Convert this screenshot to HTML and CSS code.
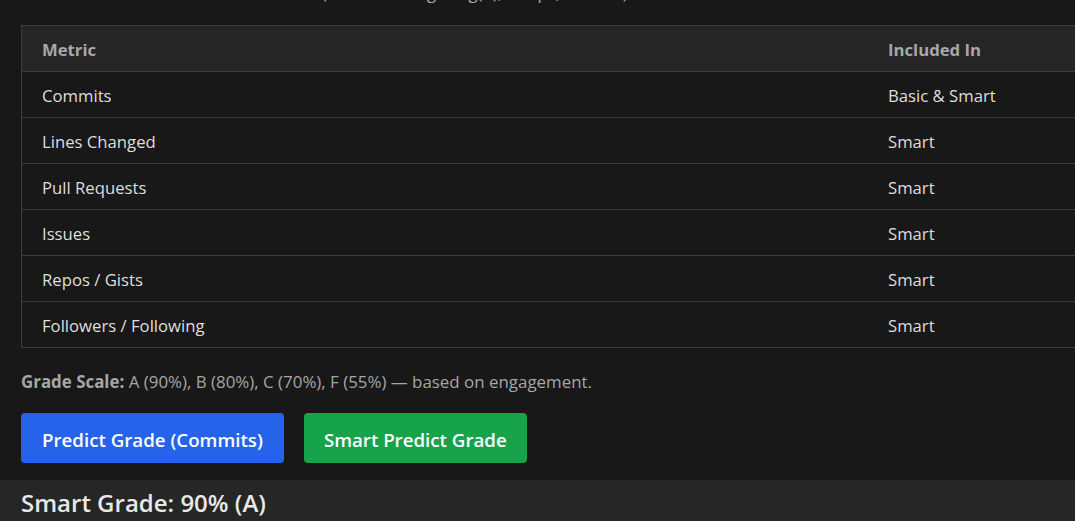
FILE: index.html
```html
<!DOCTYPE html>
<html>
<head>
<meta charset="utf-8">
<link rel="stylesheet" href="styles.css">
</head>
<body>
<div class="page">
  <p class="intro">(scaled using log(n), caps, ratios)</p>
  <table class="metrics">
    <thead>
      <tr><th class="c1">Metric</th><th class="c2">Included In</th></tr>
    </thead>
    <tbody>
      <tr><td>Commits</td><td>Basic &amp; Smart</td></tr>
      <tr><td>Lines Changed</td><td>Smart</td></tr>
      <tr><td>Pull Requests</td><td>Smart</td></tr>
      <tr><td>Issues</td><td>Smart</td></tr>
      <tr><td>Repos / Gists</td><td>Smart</td></tr>
      <tr><td>Followers / Following</td><td>Smart</td></tr>
    </tbody>
  </table>
  <p class="scale"><strong>Grade Scale:</strong> A (90%), B (80%), C (70%), F (55%) — based on engagement.</p>
  <div class="actions">
    <button class="btn btn-blue">Predict Grade (Commits)</button>
    <button class="btn btn-green">Smart Predict Grade</button>
  </div>
</div>
<div class="result">
  <h2 class="result-title">Smart Grade: 90% (A)</h2>
</div>
</body>
</html>
```

FILE: styles.css
```css
html, body {
  margin: 0;
  padding: 0;
  background: #181818;
  overflow: hidden;
}
body {
  font-family: "Open Sans", "Noto Sans", sans-serif;
  color: #dddddd;
  font-size: 16.7px;
}
.page {
  padding-left: 21px;
}
.intro {
  margin: -18px 0 0 0;
  height: 21px;
  line-height: 21px;
  color: #aaaaaa;
  font-size: 16.7px;
  padding-left: 301px;
  word-spacing: 14px;
}
.metrics {
  margin-top: 22px;
  border-collapse: collapse;
  width: 1120px;
  table-layout: fixed;
  border-left: 1px solid #3b3b3b;
}
.metrics th, .metrics td {
  border-top: 1px solid #3b3b3b;
  border-bottom: 1px solid #3b3b3b;
  padding: 13px 20px 11px;
  line-height: 21px;
  text-align: left;
  font-size: 16.7px;
}
.metrics th {
  background: #262626;
  color: #a8a8a8;
  font-weight: 700;
}
.metrics td {
  color: #dedede;
}
.c1 { width: 806px; }
.scale {
  margin: 23px 0 0 0;
  color: #a6a6a6;
  font-size: 16.9px;
  line-height: 22px;
}
.scale strong {
  color: #a6a6a6;
  font-weight: 700;
}
.actions {
  display: flex;
  gap: 20px;
  margin-top: 20px;
}
.btn {
  border: none;
  border-radius: 4px;
  height: 50px;
  padding: 3px 21px 0;
  color: #ffffff;
  font-family: inherit;
  font-size: 18.7px;
  font-weight: 600;
}
.btn-blue { background: #2563eb; }
.btn-green { background: #16a34a; padding: 3px 20px 0; }
.result {
  margin-top: 17px;
  background: #262626;
  padding: 7px 21px 0;
  height: 60px;
}
.result-title {
  margin: 0;
  font-size: 24px;
  font-weight: 600;
  color: #e8e8e8;
  line-height: 32px;
}
```
